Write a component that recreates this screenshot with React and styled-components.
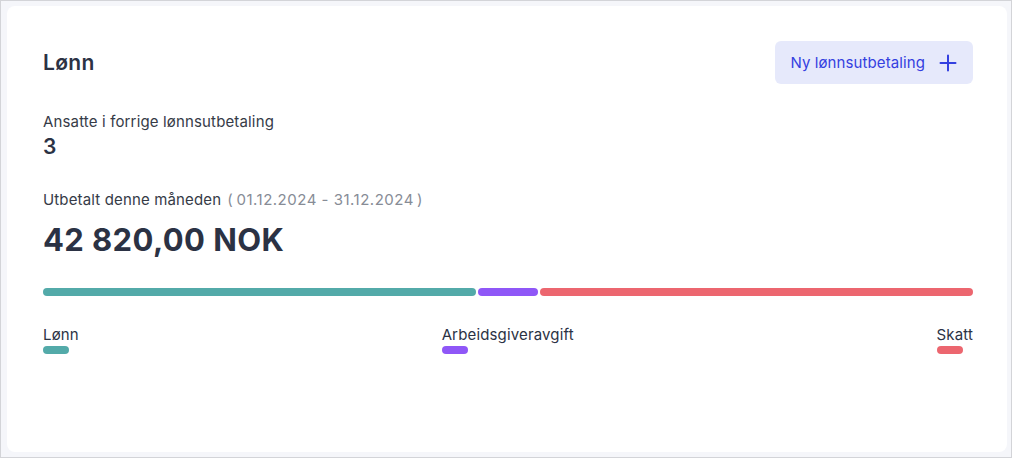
import React from 'react';
import styled, { createGlobalStyle } from 'styled-components';

const GlobalStyle = createGlobalStyle`
  html, body {
    margin: 0;
    padding: 0;
    background: #ffffff;
  }
  body {
    font-family: Inter, "Noto Sans", "Liberation Sans", sans-serif;
    color: #2b3244;
  }
`;

const Frame = styled.div`
  box-sizing: border-box;
  width: 1012px;
  height: 458px;
  border: 1px solid #d3d4d8;
  background: #f5f6fa;
  padding: 5px 4px 5px 6px;
  display: flex;
`;

const Card = styled.div`
  box-sizing: border-box;
  flex: 1;
  background: #ffffff;
  border-radius: 8px;
  padding: 35px 34px 30px 36px;
  display: flex;
  flex-direction: column;
`;

const Header = styled.div`
  display: flex;
  align-items: center;
  justify-content: space-between;
`;

const Title = styled.h2`
  margin: 0;
  font-size: 21px;
  font-weight: 600;
  letter-spacing: 0.3px;
  color: #2b3244;
`;

const PrimaryButton = styled.button`
  display: flex;
  align-items: center;
  gap: 14px;
  height: 43px;
  padding: 0 16px 0 15px;
  border: none;
  border-radius: 6px;
  background: #e6e9fb;
  color: #3440e0;
  font-family: inherit;
  font-size: 15px;
  letter-spacing: 0.1px;
  cursor: pointer;
`;

const Stat = styled.div`
  display: flex;
  flex-direction: column;
  margin-top: ${(p) => p.$top}px;
`;

const Label = styled.div`
  font-size: 15px;
  line-height: 20px;
  letter-spacing: 0.15px;
  color: #363b47;
`;

const Muted = styled.span`
  color: #878c96;
  margin-left: 6px;
  letter-spacing: 0.5px;
`;

const SmallValue = styled.div`
  margin-top: 2px;
  font-size: 21px;
  font-weight: 600;
  line-height: 26px;
  color: #2b3244;
`;

const BigValue = styled.div`
  margin-top: 12px;
  font-size: 31px;
  font-weight: 700;
  line-height: 36px;
  letter-spacing: 0.4px;
  color: #2b3244;
`;

const Bar = styled.div`
  display: flex;
  gap: 2px;
  height: 8px;
  margin-top: 30px;
`;

const Segment = styled.div`
  height: 100%;
  border-radius: 4px;
  background: ${(p) => p.$color};
`;

const Legend = styled.div`
  display: flex;
  justify-content: space-between;
  margin-top: 30px;
`;

const LegendItem = styled.div`
  display: flex;
  flex-direction: column;
  gap: 2px;
  font-size: 15px;
  line-height: 18px;
  letter-spacing: 0.15px;
  color: #2b3244;
`;

const Swatch = styled.div`
  width: 26px;
  height: 8px;
  border-radius: 4px;
  background: ${(p) => p.$color};
`;

const parts = [
  { label: 'Lønn', color: '#53aaa9', share: 433 },
  { label: 'Arbeidsgiveravgift', color: '#8f57f7', share: 60 },
  { label: 'Skatt', color: '#ec666f', share: 433 },
];

const PlusIcon = () => (
  <svg width="18" height="18" viewBox="0 0 18 18" fill="none">
    <path d="M9 1.5v15M1.5 9h15" stroke="currentColor" strokeWidth="2" strokeLinecap="round" />
  </svg>
);

export default function App() {
  return (
    <>
      <GlobalStyle />
      <Frame>
        <Card>
          <Header>
            <Title>Lønn</Title>
            <PrimaryButton>
              Ny lønnsutbetaling
              <PlusIcon />
            </PrimaryButton>
          </Header>
          <Stat $top={28}>
            <Label>Ansatte i forrige lønnsutbetaling</Label>
            <SmallValue>3</SmallValue>
          </Stat>
          <Stat $top={30}>
            <Label>
              Utbetalt denne måneden
              <Muted>(&thinsp;01.12.2024 - 31.12.2024&thinsp;)</Muted>
            </Label>
            <BigValue>42 820,00 NOK</BigValue>
          </Stat>
          <Bar>
            {parts.map((p) => (
              <Segment key={p.label} $color={p.color} style={{ flex: p.share }} />
            ))}
          </Bar>
          <Legend>
            {parts.map((p) => (
              <LegendItem key={p.label}>
                {p.label}
                <Swatch $color={p.color} />
              </LegendItem>
            ))}
          </Legend>
        </Card>
      </Frame>
    </>
  );
}
